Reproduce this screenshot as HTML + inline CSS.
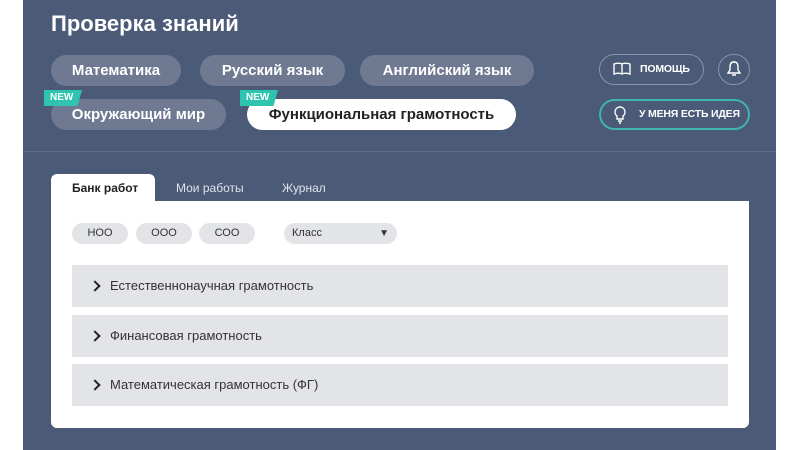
<!DOCTYPE html>
<html><head><meta charset="utf-8"><style>
*{margin:0;padding:0;box-sizing:border-box}
body{width:800px;height:450px;background:#fff;font-family:"Liberation Sans","DejaVu Sans",sans-serif;position:relative;overflow:hidden}
.panel{position:absolute;left:23px;top:0;width:753px;height:450px;background:#4b5a77}
.line{position:absolute;left:23px;top:151px;width:753px;height:1px;background:#5f6d89}
.a{position:absolute}
h1{position:absolute;left:51px;top:11px;color:#fff;font-size:22px;font-weight:bold}
.pill{position:absolute;height:31px;border-radius:16px;background:#6f7a92;color:#fff;font-weight:bold;font-size:15px;line-height:31px;text-align:center;white-space:nowrap}
.new{position:absolute;height:16px;background:#2ec4b0;color:#fff;font-size:10px;font-weight:bold;line-height:16px;padding-left:6px;clip-path:polygon(0 0,100% 0,88% 100%,0 100%)}
.btn{position:absolute;border:1.5px solid #8994aa;border-radius:16px;color:#fff;font-weight:bold;font-size:10.5px;letter-spacing:-0.2px;white-space:nowrap}
.card{position:absolute;left:51px;top:201px;width:698px;height:227px;background:#fff;border-radius:0 0 6px 6px}
.tab{position:absolute;top:174px;height:28px;font-size:12px;line-height:28px;color:#dfe3ea}
.chip{position:absolute;top:223px;height:21px;border-radius:11px;background:#e3e4e8;font-size:11px;line-height:21px;text-align:center;color:#333}
.row{position:absolute;left:72px;width:656px;height:42px;background:#e3e4e8;font-size:13px;color:#333;line-height:42px;padding-left:38px}
.row:before{content:"";position:absolute;left:19px;top:17px;width:6px;height:6px;border-top:2px solid #222;border-right:2px solid #222;transform:rotate(45deg)}
</style></head><body>
<div class="panel"></div><div class="line"></div>
<h1>Проверка знаний</h1>
<div class="pill" style="left:51px;top:55px;width:130px">Математика</div>
<div class="pill" style="left:200px;top:55px;width:145px">Русский язык</div>
<div class="pill" style="left:360px;top:55px;width:174px">Английский язык</div>
<div class="pill" style="left:51px;top:99px;width:175px">Окружающий мир</div>
<div class="pill" style="left:247px;top:99px;width:269px;background:#fff;color:#222">Функциональная грамотность</div>
<div class="new" style="left:44px;top:90px;width:38px">NEW</div>
<div class="new" style="left:240px;top:90px;width:38px">NEW</div>
<div class="btn" style="left:599px;top:54px;width:105px;height:31px;line-height:28px;padding-left:40px">ПОМОЩЬ
<svg class="a" style="left:13px;top:7px" width="18" height="14" viewBox="0 0 18 14" fill="none" stroke="#fff" stroke-width="1.4"><path d="M9 2C7 1 4 1 1 2v10c3-1 6-1 8 0 2-1 5-1 8 0V2c-3-1-6-1-8 0v10"/></svg></div>
<div class="btn" style="left:718px;top:54px;width:32px;height:31px">
<svg class="a" style="left:7px;top:5px" width="16" height="18" viewBox="0 0 16 18" fill="none" stroke="#fff" stroke-width="1.4"><path d="M8 2c-3 0-4 2-4 5v3l-2 3h12l-2-3V7c0-3-1-5-4-5zM6 15h4M8 1v1"/></svg></div>
<div class="btn" style="left:599px;top:99px;width:151px;height:31px;line-height:27px;padding-left:38px;border-color:#3fb3ac;border-width:2px">У МЕНЯ ЕСТЬ ИДЕЯ
<svg class="a" style="left:13px;top:5px" width="12" height="18" viewBox="0 0 12 18" fill="none" stroke="#fff" stroke-width="1.4"><path d="M6 1a5 5 0 0 0-3 9v3h6v-3a5 5 0 0 0-3-9zM4 15h4M5 17h2"/></svg></div>
<div class="a" style="left:51px;top:174px;width:104px;height:28px;background:#fff;border-radius:6px 6px 0 0"></div>
<div class="tab" style="left:72px;color:#222;font-weight:bold">Банк работ</div>
<div class="tab" style="left:176px">Мои работы</div>
<div class="tab" style="left:282px">Журнал</div>
<div class="card"></div>
<div class="chip" style="left:72px;width:56px">НОО</div>
<div class="chip" style="left:136px;width:56px">ООО</div>
<div class="chip" style="left:199px;width:56px">СОО</div>
<div class="chip" style="left:284px;width:113px;text-align:left;padding-left:8px">Класс<span class="a" style="right:8px;top:0;font-size:10px">▼</span></div>
<div class="row" style="top:265px">Естественнонаучная грамотность</div>
<div class="row" style="top:315px">Финансовая грамотность</div>
<div class="row" style="top:364px">Математическая грамотность (ФГ)</div>
</body></html>
